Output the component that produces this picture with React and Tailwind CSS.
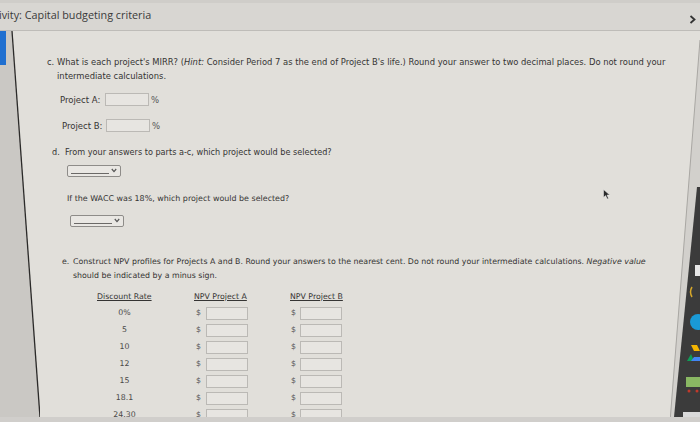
import React from "react";

function Input({ w = "w-[44px]" }) {
  return <div className={`${w} h-[13px] border border-[#bbb9b5] bg-[#e7e5e1]`} />;
}

function Select() {
  return (
    <div className="w-[54px] h-[12px] border border-[#8e8c89] rounded-[2px] bg-[#e9e7e3] flex items-end pl-[3px] pr-[3px] pb-[2px] justify-between">
      <div className="w-[38px] h-px bg-[#6b6967]" />
      <svg width="6" height="5" viewBox="0 0 6 5" className="mb-[1px]">
        <path d="M0.8 1 L3 3.6 L5.2 1" fill="none" stroke="#555" strokeWidth="1.2" />
      </svg>
    </div>
  );
}

function LeftEdge() {
  return (
    <svg width="40" height="386" viewBox="0 0 40 386" className="block">
      <polygon points="0,0 12,0 40,386 0,386" fill="#cac8c4" />
      <line x1="12" y1="0" x2="40" y2="386" stroke="#2b2a29" strokeWidth="1.3" />
      <rect x="0" y="0" width="6" height="34" fill="#1f6fd0" />
    </svg>
  );
}

function RightEdge() {
  return (
    <svg width="30" height="386" viewBox="0 0 30 386" className="block">
      <polygon points="30,9 30,386 0,386" fill="#d2d0cc" />
      <line x1="30" y1="9" x2="0" y2="391" stroke="#a9a7a3" strokeWidth="1" />
      <polygon points="27,156 30,156 30,386 4,386" fill="#3b3b3b" />
      <rect x="25" y="234" width="5" height="11" fill="#e6e6e6" />
      <path d="M22 256 Q19 261 22 266" fill="none" stroke="#d7a72a" strokeWidth="1.5" />
      <circle cx="28" cy="291" r="8" fill="#1a9ad6" />
      <polygon points="21,314 27,314 30,320 24,320" fill="#f4b400" />
      <polygon points="17,330 21,323 24,330" fill="#0f9d58" />
      <polygon points="21,330 30,330 30,326 24,326" fill="#4285f4" />
      <rect x="16" y="346" width="14" height="10" fill="#8ab863" />
      <circle cx="19" cy="360" r="1.5" fill="#c0392b" />
      <circle cx="27" cy="360" r="1.5" fill="#c0392b" />
      <rect x="13" y="381" width="17" height="5" fill="#d9d9d9" />
    </svg>
  );
}

function Cursor() {
  return (
    <svg width="8" height="11" viewBox="0 0 8 11" className="absolute left-[563px] top-[158px]">
      <path d="M0.5 0.5 L0.5 8.5 L2.6 6.6 L4.2 10 L5.5 9.4 L4 6.1 L6.8 6 Z" fill="#2a2a2a" stroke="#f0f0f0" strokeWidth="0.5" />
    </svg>
  );
}

const rows = ["0%", "5", "10", "12", "15", "18.1", "24.30"];

export default function App() {
  return (
    <div className="w-[700px] h-[422px] overflow-hidden bg-[#e1dfda] flex flex-col text-[#353433] font-['DejaVu_Sans',sans-serif]">
      <div className="h-[3px] bg-[#cfcdc9] shrink-0" />
      <div className="h-[28px] shrink-0 bg-[#d8d6d2] border-b border-[#bebcb8] flex items-center justify-between font-['Open_Sans',sans-serif] text-[10.8px] text-[#3a3a3a]">
        <span className="-ml-[1px] -mt-[2px]">ivity: Capital budgeting criteria</span>
        <svg width="7" height="9" viewBox="0 0 7 9" className="mr-[4px] mt-[5px]">
          <path d="M1.5 1 L5.5 4.5 L1.5 8" fill="none" stroke="#333" strokeWidth="1.8" />
        </svg>
      </div>
      <div className="flex-1 flex min-h-0 overflow-hidden">
        <div className="w-[40px] shrink-0">
          <LeftEdge />
        </div>
        <div className="flex-1 relative leading-[14px] overflow-hidden">
          <Cursor />
          {/* part c */}
          <div className="flex ml-[7px] mt-[24px] text-[8.4px]">
            <span className="w-[10px] shrink-0">c.</span>
            <div className="whitespace-nowrap">
              <div>
                What is each project's MIRR? (<i>Hint:</i> Consider Period 7 as the end of Project B's life.) Round your answer to two decimal places. Do not round your
              </div>
              <div>intermediate calculations.</div>
            </div>
          </div>
          <div className="flex items-center ml-[20px] mt-[10px] h-[13px] text-[8.5px]">
            <span className="w-[45px]">Project A:</span>
            <Input />
            <span className="ml-[2px] text-[#555]">%</span>
          </div>
          <div className="flex items-center ml-[22px] mt-[13px] h-[13px] text-[8.5px]">
            <span className="w-[44px]">Project B:</span>
            <Input />
            <span className="ml-[2px] text-[#555]">%</span>
          </div>
          {/* part d */}
          <div className="flex ml-[12px] mt-[13px] text-[8.15px]">
            <span className="w-[13px] shrink-0">d.</span>
            <span className="whitespace-nowrap">From your answers to parts a-c, which project would be selected?</span>
          </div>
          <div className="ml-[27px] mt-[6px]">
            <Select />
          </div>
          <div className="ml-[27px] mt-[15px] whitespace-nowrap text-[7.95px]">If the WACC was 18%, which project would be selected?</div>
          <div className="ml-[30px] mt-[9px]">
            <Select />
          </div>
          {/* part e */}
          <div className="flex ml-[22px] mt-[28px] text-[7.85px]">
            <span className="w-[11px] shrink-0">e.</span>
            <div className="whitespace-nowrap">
              <div>
                Construct NPV profiles for Projects A and B. Round your answers to the nearest cent. Do not round your intermediate calculations. <i>Negative value</i>
              </div>
              <div>should be indicated by a minus sign.</div>
            </div>
          </div>
          <div className="ml-[57px] mt-[7px] grid grid-cols-[55px_54px_52px] gap-x-[42px] leading-[13px] text-[7.8px]">
            <span className="underline whitespace-nowrap">Discount Rate</span>
            <span className="underline whitespace-nowrap">NPV Project A</span>
            <span className="underline whitespace-nowrap">NPV Project B</span>
          </div>
          <div className="ml-[57px] mt-[3px] flex flex-col gap-[4px] text-[7.8px]">
            {rows.map((r) => (
              <div key={r} className="grid grid-cols-[55px_54px_52px] gap-x-[42px] h-[13px] items-center">
                <span className="text-center text-[#4a4948]">{r}</span>
                <div className="flex items-center justify-between pl-[2px]">
                  <span className="text-[#555]">$</span>
                  <Input w="w-[42px]" />
                </div>
                <div className="flex items-center justify-between pl-[1px]">
                  <span className="text-[#555]">$</span>
                  <Input w="w-[42px]" />
                </div>
              </div>
            ))}
          </div>
        </div>
        <div className="w-[30px] shrink-0">
          <RightEdge />
        </div>
      </div>
      <div className="h-[5px] shrink-0 bg-[#d0cecb]" />
    </div>
  );
}
